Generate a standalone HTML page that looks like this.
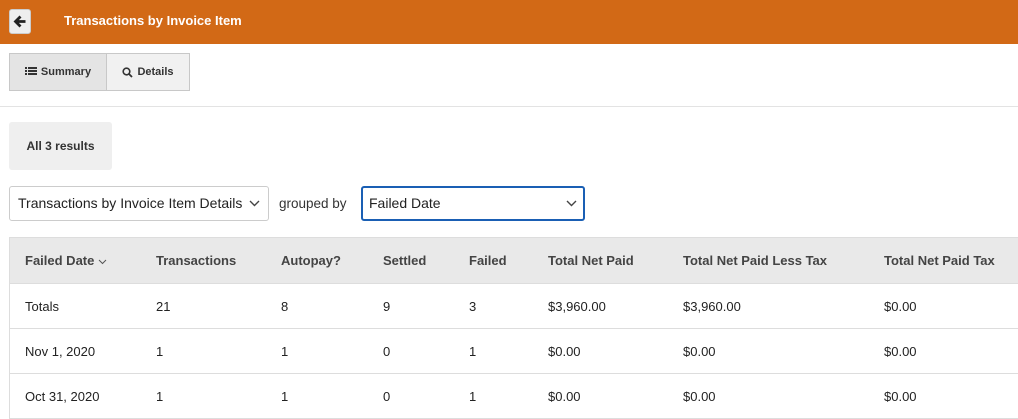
<!DOCTYPE html><html><head><style>
*{box-sizing:border-box;margin:0;padding:0}
body{width:1018px;height:412px;overflow:hidden;background:#fff;font-family:"Liberation Sans",sans-serif;color:#222;position:relative}
.hdr{position:absolute;left:0;top:0;width:1018px;height:44px;background:#d26916}
.back{position:absolute;left:9px;top:9px;width:22px;height:25px;background:#eee;border:1px solid #ccc;border-radius:3px}
.title{position:absolute;left:64px;top:13px;color:#fff;font-size:13px;font-weight:bold}
.btns{position:absolute;left:9px;top:53px;height:38px;display:flex;border:1px solid #c8c8c8}
.btns div{font-size:11px;font-weight:bold;color:#333;display:flex;align-items:center;justify-content:center;gap:4px}
.sep{position:absolute;left:0;top:106px;width:1018px;height:1px;background:#e3e3e3}
.res{position:absolute;left:9px;top:122px;width:103px;height:48px;background:#efefef;border-radius:3px;font-size:12px;font-weight:bold;display:flex;align-items:center;justify-content:center;color:#333}
.sel{position:absolute;top:186px;height:35px;border:1px solid #ccc;border-radius:3px;font-size:14px;padding-left:8px;line-height:33px;color:#222}
.tbl{position:absolute;left:9px;top:237px;width:1009px;border-left:1px solid #ddd;border-top:1px solid #ddd}
.row{position:relative;height:45px;border-bottom:1px solid #ddd;font-size:13px}
.row span{position:absolute;top:0;line-height:45px}
.th{background:#e9e9e9;height:46px;font-weight:bold;color:#444}
.th span{line-height:46px}
</style></head><body>
<div class="hdr"><div class="back"><svg width="20" height="23" viewBox="0 0 20 23"><path d="M15.5 11.5H5.5M10.5 6.5L5.5 11.5L10.5 16.5" stroke="#222" stroke-width="2.8" fill="none"/></svg></div><div class="title">Transactions by Invoice Item</div></div>
<div class="btns"><div style="width:97px;background:#e4e4e4;border-right:1px solid #c8c8c8"><svg width="12" height="10"><path d="M0 1h2M3 1h9M0 4h2M3 4h9M0 7h2M3 7h9" stroke="#333" stroke-width="2"/></svg>Summary</div><div style="width:82px;background:#f1f1f1"><svg width="11" height="11"><circle cx="4.5" cy="4.5" r="3.3" stroke="#333" stroke-width="1.6" fill="none"/><path d="M7 7l3 3" stroke="#333" stroke-width="1.8"/></svg>Details</div></div>
<div class="sep"></div>
<div class="res">All 3 results</div>
<div class="sel" style="left:9px;width:260px">Transactions by Invoice Item Details<svg style="position:absolute;right:8px;top:13px" width="11" height="7"><path d="M1 1l4.5 4.5L10 1" stroke="#444" stroke-width="1.4" fill="none"/></svg></div>
<div style="position:absolute;left:279px;top:196px;font-size:13.5px;color:#333">grouped by</div>
<div class="sel" style="left:361px;width:224px;border:2px solid #1a5fb4;padding-left:6px;line-height:31px">Failed Date<svg style="position:absolute;right:6px;top:12px" width="11" height="7"><path d="M1 1l4.5 4.5L10 1" stroke="#444" stroke-width="1.4" fill="none"/></svg></div>
<div class="tbl">
<div class="row th"><span style="left:15px">Failed Date <svg width="9" height="6" style="vertical-align:middle"><path d="M1 1l3.5 3.5L8 1" stroke="#555" stroke-width="1" fill="none"/></svg></span><span style="left:146px">Transactions</span><span style="left:271px">Autopay?</span><span style="left:373px">Settled</span><span style="left:459px">Failed</span><span style="left:538px">Total Net Paid</span><span style="left:673px">Total Net Paid Less Tax</span><span style="left:874px">Total Net Paid Tax</span></div>
<div class="row"><span style="left:15px">Totals</span><span style="left:146px">21</span><span style="left:271px">8</span><span style="left:373px">9</span><span style="left:459px">3</span><span style="left:538px">$3,960.00</span><span style="left:673px">$3,960.00</span><span style="left:874px">$0.00</span></div>
<div class="row"><span style="left:15px">Nov 1, 2020</span><span style="left:146px">1</span><span style="left:271px">1</span><span style="left:373px">0</span><span style="left:459px">1</span><span style="left:538px">$0.00</span><span style="left:673px">$0.00</span><span style="left:874px">$0.00</span></div>
<div class="row"><span style="left:15px">Oct 31, 2020</span><span style="left:146px">1</span><span style="left:271px">1</span><span style="left:373px">0</span><span style="left:459px">1</span><span style="left:538px">$0.00</span><span style="left:673px">$0.00</span><span style="left:874px">$0.00</span></div>
</div>
</body></html>
